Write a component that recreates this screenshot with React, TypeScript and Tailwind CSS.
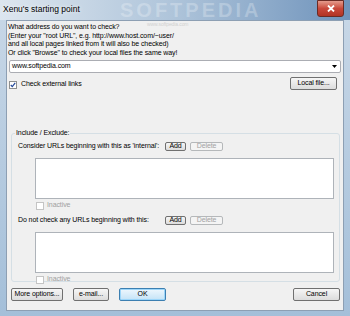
import React from 'react';

const btn =
  'flex items-center justify-center whitespace-nowrap rounded-[2px] border border-[#707070] bg-gradient-to-b from-[#f6f6f6] to-[#dcdcdc] text-black';

const Check: React.FC<{ checked?: boolean; disabled?: boolean }> = ({ checked, disabled }) => (
  <div
    className={`flex h-[8px] w-[8px] shrink-0 items-center justify-center border bg-white ${
      disabled ? 'border-[#c4c4c4]' : 'border-[#8e8f8f]'
    }`}
  >
    {checked && (
      <svg width="6" height="6" viewBox="0 0 6 6">
        <path d="M0.8 3 L2.3 4.6 L5.2 0.9" fill="none" stroke="#21479a" strokeWidth="1.2" />
      </svg>
    )}
  </div>
);

const AddDelete: React.FC = () => (
  <div className="flex gap-[4px]">
    <div className={`${btn} h-[9px] w-[21px]`}>Add</div>
    <div className="flex h-[9px] w-[33px] items-center justify-center rounded-[2px] border border-[#b5b8ba] bg-[#f4f4f4] text-[#a3a3a3]">
      Delete
    </div>
  </div>
);

const UrlList: React.FC<{ label: string }> = ({ label }) => (
  <div className="flex flex-col">
    <div className="flex h-[11px] items-center">
      <span className="w-[153px] shrink-0 overflow-hidden whitespace-nowrap pl-[6px]">{label}</span>
      <AddDelete />
    </div>
    <div className="mt-[6px] ml-[23px] mr-[5px] h-[41px] border border-[#aeb3b9] bg-white" />
    <div className="mt-[3px] ml-[24px] flex h-[8px] items-center gap-[3px] text-[#a0a0a0]">
      <Check disabled />
      <span>Inactive</span>
    </div>
  </div>
);

export default function App() {
  return (
    <div
      className="flex h-[316px] w-[350px] flex-col overflow-hidden bg-gradient-to-b from-[#c9d8e7] to-[#a4bfd9] text-[7px] leading-[8.5px] tracking-[-0.1px] text-black"
      style={{ fontFamily: '"Liberation Sans", Arial, sans-serif' }}
    >
      {/* title bar */}
      <div className="relative flex h-[20px] items-start overflow-hidden bg-gradient-to-r from-[#dde6ef] via-[#aec4da] to-[#6f93bb]">
        <span className="mt-[4px] ml-[3px] text-[8.5px] leading-[11px] tracking-normal text-black [text-shadow:0_0_4px_#fff]">
          Xenu's starting point
        </span>
        <span className="absolute left-[120px] top-[1px] text-[20px] leading-[18px] font-bold tracking-[3px] text-white/25">
          SOFTPEDIA
        </span>
        <div className="absolute right-[6px] top-0 flex h-[17px] w-[27px] items-center justify-center rounded-b-[3px] border border-[#6b2b25] bg-gradient-to-b from-[#e49a8c] via-[#c9483b] to-[#b13324]">
          <svg width="8" height="7" viewBox="0 0 8 7">
            <path d="M1 0.5 L7 6.5 M7 0.5 L1 6.5" stroke="#fff" strokeWidth="1.8" />
          </svg>
        </div>
      </div>

      <div className="flex flex-1 px-[6px] pb-[5px]">
        <div className="relative flex flex-1 flex-col border border-[#8d9fb3] bg-[#f0f0f0] px-[1px]">
          <span className="absolute left-[140px] top-[1px] text-[5px] leading-[5px] text-[#d0d0d0]">www.softpedia.com</span>
          <div className="mt-[2px] whitespace-nowrap">
            <p>What address do you want to check?</p>
            <p>(Enter your "root URL", e.g. http://www.host.com/~user/</p>
            <p>and all local pages linked from it will also be checked)</p>
            <p>Or click "Browse" to check your local files the same way!</p>
          </div>

          {/* combobox */}
          <div className="mt-[3px] ml-[1px] mr-[1px] flex h-[13px] items-center justify-between rounded-[2px] border border-[#abadb3] bg-white pl-[2px] pr-[3px]">
            <span>www.softpedia.com</span>
            <svg width="5" height="3" viewBox="0 0 5 3">
              <path d="M0 0 H5 L2.5 3 Z" fill="#000" />
            </svg>
          </div>

          <div className="mt-[4px] flex h-[13px] items-center justify-between pl-[1px] pr-[5px]">
            <div className="mt-[2px] flex items-center gap-[4px]">
              <Check checked />
              <span>Check external links</span>
            </div>
            <div className={`${btn} h-[13px] w-[47px]`}>Local file...</div>
          </div>

          {/* group box */}
          <fieldset className="mt-[39px] ml-[3px] mr-[2px] h-[153px] rounded-[3px] border border-[#d5dfe5] px-0 pb-0">
            <legend className="ml-[3px] px-[1px]">Include / Exclude:</legend>
            <div className="mt-[3px] flex flex-col gap-[5px]">
              <UrlList label="Consider URLs beginning with this as 'internal':" />
              <UrlList label="Do not check any URLs beginning with this:" />
            </div>
          </fieldset>

          <div className="mt-[6px] flex items-center pl-[3px] pr-[2px]">
            <div className={`${btn} h-[13px] w-[52px]`}>More options...</div>
            <div className={`${btn} ml-[10px] h-[13px] w-[36px]`}>e-mail...</div>
            <div className="ml-[10px] flex h-[13px] w-[47px] items-center justify-center rounded-[2px] border border-[#3c7fb1] bg-gradient-to-b from-[#eef7fd] to-[#c4e3f7] shadow-[inset_0_0_0_1px_#9cd6fa]">
              OK
            </div>
            <div className={`${btn} ml-auto h-[13px] w-[47px]`}>Cancel</div>
          </div>
        </div>
      </div>
    </div>
  );
}
